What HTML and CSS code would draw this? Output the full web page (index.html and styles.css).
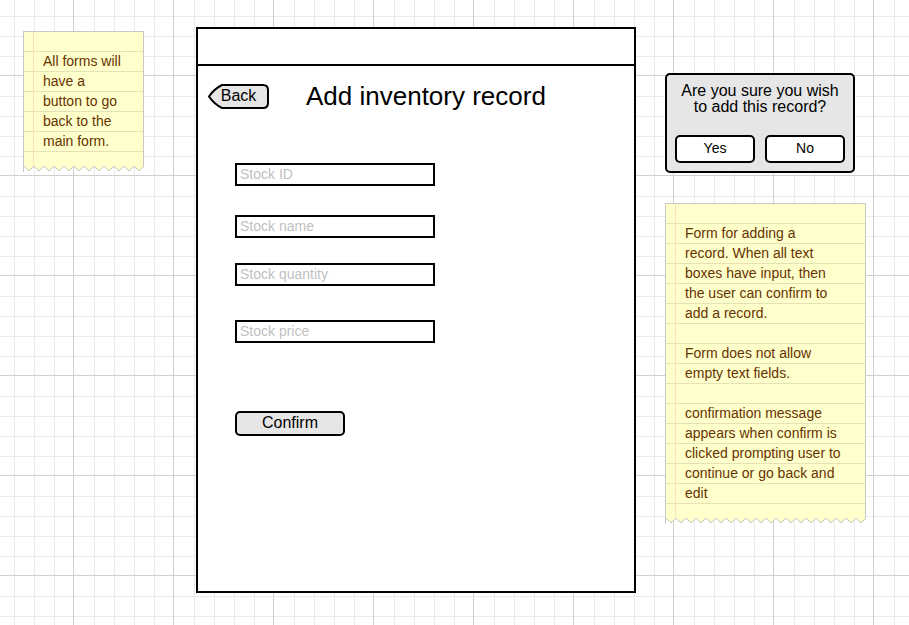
FILE: index.html
```html
<!DOCTYPE html>
<html lang="en">
<head>
<meta charset="utf-8">
<meta name="viewport" content="width=device-width, initial-scale=1">
<title>Add inventory record</title>
<link rel="stylesheet" href="styles.css">
</head>
<body>
<main class="board">
  <aside class="note note-back">
    <div class="note-body">
      <p>All forms will<br>have a<br>button to go<br>back to the<br>main form.</p>
    </div>
    <svg class="note-tear" aria-hidden="true">
      <defs>
        <pattern id="tear" width="10" height="6" patternUnits="userSpaceOnUse">
          <path d="M0 0 L5 5 L10 0 Z" fill="#ffffcc"/>
          <path d="M0 0 L5 5 L10 0" fill="none" stroke="#c4c4b8"/>
        </pattern>
      </defs>
      <rect width="100%" height="6" fill="url(#tear)"/>
    </svg>
  </aside>

  <section class="window">
    <div class="window-bar"></div>
    <header class="window-head">
      <button class="back" type="button">
        <svg class="back-shape" viewBox="0 0 61 25" aria-hidden="true">
          <path d="M1 12.500 Q6 5 14 1 H55 Q60 1 60 6 V19 Q60 24 55 24 H14 Q6 20 1 12.500 Z" fill="#e6e6e6" stroke="#000" stroke-width="2" stroke-linejoin="round"/>
        </svg>
        <span class="back-label">Back</span>
      </button>
      <h1>Add inventory record</h1>
    </header>
    <form class="form">
      <input class="stock-id" type="text" placeholder="Stock ID" aria-label="Stock ID">
      <input class="stock-name" type="text" placeholder="Stock name" aria-label="Stock name">
      <input class="stock-quantity" type="text" placeholder="Stock quantity" aria-label="Stock quantity">
      <input class="stock-price" type="text" placeholder="Stock price" aria-label="Stock price">
      <button class="confirm" type="button">Confirm</button>
    </form>
  </section>

  <div class="side">
    <section class="dialog">
      <p>Are you sure you wish to add this record?</p>
      <div class="dialog-actions">
        <button type="button">Yes</button>
        <button type="button">No</button>
      </div>
    </section>
    <aside class="note">
      <div class="note-body">
        <p>Form for adding a<br>record. When all text<br>boxes have input, then<br>the user can confirm to<br>add a record.</p>
        <p>Form does not allow<br>empty text fields.</p>
        <p>confirmation message<br>appears when confirm is<br>clicked prompting user to<br>continue or go back and<br>edit</p>
      </div>
      <svg class="note-tear" aria-hidden="true">
        <rect width="100%" height="6" fill="url(#tear)"/>
      </svg>
    </aside>
  </div>
</main>
</body>
</html>
```
FILE: styles.css
```css
* {
  box-sizing: border-box;
}

body {
  margin: 0;
  min-height: 100vh;
  font-family: "Liberation Sans", Arial, sans-serif;
  color: #000;
  background-color: #fff;
  background-image:
    linear-gradient(to right, #d0d0d0 1px, transparent 1px),
    linear-gradient(to bottom, #d0d0d0 1px, transparent 1px),
    linear-gradient(to right, transparent 21px, #ebebeb 21px 22px, transparent 22px 41px, #ebebeb 41px 42px, transparent 42px 61px, #ebebeb 61px 62px, transparent 62px 81px, #ebebeb 81px 82px, transparent 82px),
    linear-gradient(to bottom, transparent 21px, #ebebeb 21px 22px, transparent 22px 41px, #ebebeb 41px 42px, transparent 42px 61px, #ebebeb 61px 62px, transparent 62px 81px, #ebebeb 81px 82px, transparent 82px);
  background-size: 100px 100px;
  background-position: 73px 75px;
}

p,
h1 {
  margin: 0;
  font-weight: 400;
}

button,
input {
  font-family: inherit;
  color: inherit;
  border: 2px solid #000;
}

.board {
  display: flex;
  align-items: flex-start;
  padding: 27px 43px 32px 23px;
}

/* Lined sticky notes */
.note-back {
  flex: none;
  width: 121px;
  margin: 4px 52px 0 0;
}

.note-body {
  padding: 19px 0 15px 19px;
  border: 1px solid #c8c8c8;
  border-bottom: 0;
  background-color: #ffffcc;
  background-image:
    linear-gradient(to right, transparent 10px, #ffe0b0 10px 11px, transparent 11px),
    repeating-linear-gradient(to bottom, #e4e3b8 0 1px, transparent 1px 20px);
  background-origin: border-box;
  font-size: 14px;
  line-height: 20px;
  color: #663300;
  white-space: nowrap;
}

.note-body p + p {
  margin-top: 20px;
}

.note-tear {
  display: block;
  width: 100%;
  height: 6px;
  border-left: 1px solid #c8c8c8;
}

/* Form window */
.window {
  flex: 1;
  min-width: 360px;
  border: 2px solid #000;
  background: #fff;
}

.window-bar {
  height: 37px;
  border-bottom: 2px solid #000;
}

.window-head {
  display: flex;
  align-items: center;
  gap: 37px;
  padding: 14px 10px 0;
}

.window-head h1 {
  font-size: 26px;
  line-height: 33px;
}

.back {
  display: grid;
  width: 61px;
  height: 25px;
  padding: 0;
  border: 0;
  background: none;
  font-size: 16px;
  line-height: 23px;
}

.back-shape,
.back-label {
  grid-area: 1 / 1;
}

.back-shape {
  width: 61px;
  height: 25px;
}

.form {
  display: flex;
  flex-direction: column;
  align-items: flex-start;
  padding: 50px 37px 155px;
}

.form input {
  width: 200px;
  height: 23px;
  padding: 0 3px 2px;
  border-radius: 0;
  background: #fff;
  font-size: 14px;
}

.form input::placeholder {
  color: #bfbfbf;
  opacity: 1;
}

.stock-name {
  margin-top: 29px;
}

.stock-quantity {
  margin-top: 25px;
}

.stock-price {
  margin-top: 34px;
}

.confirm {
  width: 110px;
  height: 25px;
  margin-top: 68px;
  padding: 0 0 2px;
  border-radius: 5px;
  background: #e6e6e6;
  font-size: 16px;
  line-height: 18px;
}

/* Confirmation dialog */
.side {
  flex: none;
  width: 201px;
  margin: 46px 0 0 29px;
}

.dialog {
  width: 190px;
  margin-bottom: 30px;
  padding: 8px;
  border: 2px solid #000;
  border-radius: 5px;
  background: #e6e6e6;
}

.dialog p {
  margin-bottom: 20px;
  font-size: 16px;
  line-height: 16px;
  text-align: center;
}

.dialog-actions {
  display: flex;
  gap: 10px;
}

.dialog-actions button {
  flex: 1;
  height: 28px;
  padding: 0 0 2px;
  border-radius: 5px;
  background: #fff;
  font-size: 14px;
}
```
